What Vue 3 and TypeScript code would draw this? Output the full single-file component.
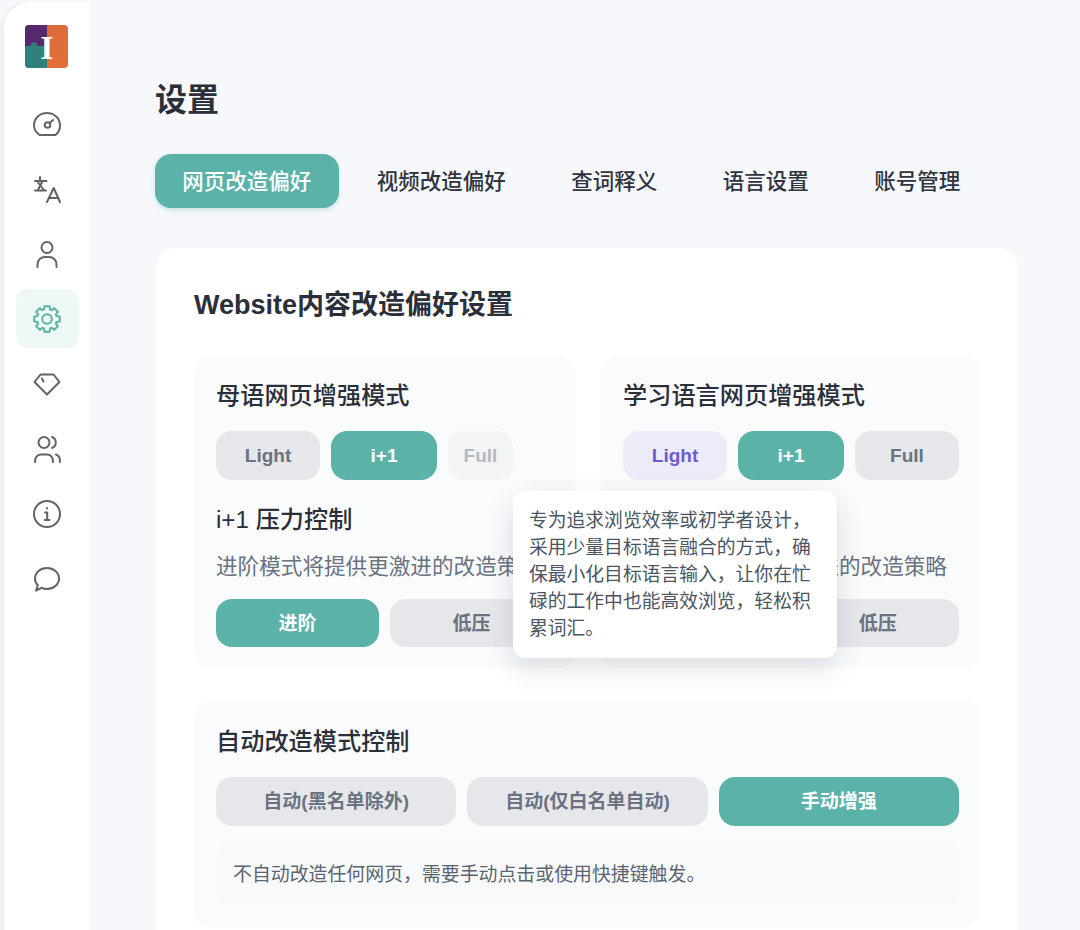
<script setup lang="ts">
import { ref } from 'vue'

interface NavItem {
  name: string
  paths: string[]
}

// 八齿齿轮的外轮廓
const gearPath = () => {
  const points: string[] = []
  for (let i = 0; i < 8; i++) {
    const angle = (i * Math.PI) / 4 - Math.PI / 2
    const corners: [number, number][] = [
      [-0.2, 13],
      [0.2, 13],
      [0.3, 10],
      [0.48, 10],
    ]
    corners.forEach(([offset, radius]) => {
      const x = 14 + radius * Math.cos(angle + offset)
      const y = 14 + radius * Math.sin(angle + offset)
      points.push(`${x.toFixed(2)} ${y.toFixed(2)}`)
    })
  }
  return `M${points.join('L')}Z`
}

const navItems: NavItem[] = [
  { name: 'dashboard', paths: ['M6.500 25h16c3-2.300 4.500-5.700 4.500-9.500C27 8.300 21.200 3 14 3S1 8.300 1 15.500C1 19.300 3.500 22.700 6.500 25Z', 'M16.600 13 20 10', 'M17.300 15a2.800 2.800 0 1 1-5.600 0 2.800 2.800 0 0 1 5.600 0Z'] },
  { name: 'translate', paths: ['M2 6h11.500', 'M7 2v4', 'M9.500 6 5 15', 'M5 7.500 11 15', 'M2 15.500h11', 'M14 27l6.700-14L27 27', 'M16.300 23h8.500'] },
  { name: 'user', paths: ['M19.500 7.500a5.500 5.500 0 1 1-11 0 5.500 5.500 0 0 1 11 0Z', 'M4.500 27v-2.500c0-4.500 3.500-7.500 7.500-7.500h4c4 0 7.500 3 7.500 7.500V27'] },
  { name: 'settings', paths: [gearPath(), 'M18.800 14a4.800 4.800 0 1 1-9.600 0 4.800 4.800 0 0 1 9.600 0Z'] },
  { name: 'vip', paths: ['M7.500 4.500h13L26.500 12 14 24.500 1.500 12l6-7.500Z', 'M9 8.500l1.500 3'] },
  { name: 'team', paths: ['M16.500 7.500a5.500 5.500 0 1 1-11 0 5.500 5.500 0 0 1 11 0Z', 'M2 27v-1c0-4 3-6.500 6-6.500h6c3 0 6 2.500 6 6.500v1', 'M19 2c2.500.9 3.800 3 3.800 5.500S21.500 12.100 19 13', 'M23 19.500c2.500 1 4 3.300 4 6.500v1'] },
  { name: 'about', paths: ['M27 14a13 13 0 1 1-26 0 13 13 0 0 1 26 0Z', 'M12 12.500h2.200V20', 'M11.800 20h4.600', 'M14 8v.5'] },
  { name: 'feedback', paths: ['M3 25.500l1.800-5.200C3 18.500 2 16.200 2 13.500 2 7.500 7.500 3 14 3s12 4.500 12 10.500S20.500 24 14 24c-2 0-3.800-.4-5.500-1.200L3 25.500Z'] },
]

const activeNav = ref('settings')

const tabs = ['网页改造偏好', '视频改造偏好', '查词释义', '语言设置', '账号管理']
const activeTab = ref(tabs[0])

const tooltipText = '专为追求浏览效率或初学者设计，采用少量目标语言融合的方式，确保最小化目标语言输入，让你在忙碌的工作中也能高效浏览，轻松积累词汇。'
</script>

<template>
  <div class="page">
    <!-- 侧边栏 -->
    <aside class="sidebar">
      <svg class="logo" viewBox="0 0 43 43" width="43" height="43">
        <defs>
          <linearGradient id="logoOrange" x1="0" y1="0" x2="0" y2="1">
            <stop offset="0" stop-color="#dc6c3c" />
            <stop offset="1" stop-color="#e26f35" />
          </linearGradient>
        </defs>
        <rect width="43" height="43" rx="4" fill="url(#logoOrange)" />
        <path d="M0 4a4 4 0 0 1 4-4h18v24H0Z" fill="#56296f" />
        <path d="M0 21h6c-.5-2 0-3.500 3-3.500s3.500 1.500 3 3.500h10v22H4a4 4 0 0 1-4-4Z" fill="#30807e" />
        <text x="21.800" y="34.300" text-anchor="middle" class="logo-letter">I</text>
      </svg>
      <nav class="nav">
        <div
          v-for="item in navItems"
          :key="item.name"
          class="nav-item"
          :class="{ active: item.name === activeNav }"
          @click="activeNav = item.name"
        >
          <svg viewBox="0 0 28 28" width="28" height="28" fill="none" stroke="currentColor" stroke-width="2" stroke-linecap="round" stroke-linejoin="round">
            <path v-for="d in item.paths" :key="d" :d="d" />
          </svg>
        </div>
      </nav>
    </aside>

    <main class="main">
      <h1 class="page-title">设置</h1>

      <!-- 标签页 -->
      <div class="tabs">
        <button
          v-for="tab in tabs"
          :key="tab"
          class="tab"
          :class="{ active: tab === activeTab }"
          @click="activeTab = tab"
        >
          {{ tab }}
        </button>
      </div>

      <section class="card">
        <h2 class="card-title">Website内容改造偏好设置</h2>

        <div class="panel-row">
          <div class="panel left">
            <h3 class="panel-title">母语网页增强模式</h3>
            <div class="btn-row">
              <button class="btn w104">Light</button>
              <button class="btn w106 on">i+1</button>
              <button class="btn w65 disabled">Full</button>
            </div>
            <h3 class="panel-title sub">i+1 压力控制</h3>
            <p class="desc">进阶模式将提供更激进的改造策略</p>
            <div class="btn-row">
              <button class="btn grow short on">进阶</button>
              <button class="btn grow short">低压</button>
            </div>
          </div>

          <div class="panel">
            <h3 class="panel-title">学习语言网页增强模式</h3>
            <div class="btn-row">
              <button class="btn w104 soft">Light</button>
              <button class="btn w106 on">i+1</button>
              <button class="btn w104">Full</button>
            </div>
            <h3 class="panel-title sub">i+1 压力控制</h3>
            <p class="desc">进阶模式将提供更激进的改造策略</p>
            <div class="btn-row">
              <button class="btn grow short on">进阶</button>
              <button class="btn grow short">低压</button>
            </div>
          </div>

          <!-- 悬浮提示 -->
          <div class="tooltip">{{ tooltipText }}</div>
        </div>

        <div class="panel auto">
          <h3 class="panel-title">自动改造模式控制</h3>
          <div class="btn-row">
            <button class="btn grow">自动(黑名单除外)</button>
            <button class="btn grow">自动(仅白名单自动)</button>
            <button class="btn grow on">手动增强</button>
          </div>
          <div class="note">不自动改造任何网页，需要手动点击或使用快捷键触发。</div>
        </div>
      </section>
    </main>
  </div>
</template>

<style>
html,
body {
  margin: 0;
  height: 930px;
  overflow: hidden;
  background: #f6f8fc;
}
</style>

<style scoped>
.page {
  display: flex;
  height: 930px;
  overflow: hidden;
  background: #f6f8fc;
  font-family: "Liberation Sans", "Noto Sans CJK SC", sans-serif;
  color: #2b2f3a;
}

/* 侧边栏 */
.sidebar {
  flex: 0 0 86px;
  margin: 2px 0 0 4px;
  background: #fff;
  border-top-left-radius: 26px;
  box-shadow: -4px 0 0 #f0f1f5;
  display: flex;
  flex-direction: column;
  align-items: center;
  padding-top: 23px;
  box-sizing: border-box;
}

.logo {
  display: block;
  margin-right: 1px;
}

.logo-letter {
  font-family: "Liberation Serif", serif;
  font-weight: 700;
  font-size: 34px;
  fill: #fff;
}

.nav {
  margin-top: 26px;
  display: flex;
  flex-direction: column;
  gap: 6px;
}

.nav-item {
  width: 63px;
  height: 59px;
  border-radius: 12px;
  display: flex;
  align-items: center;
  justify-content: center;
  color: #606368;
}

.nav-item.active {
  background: #eef8f7;
  color: #5bb2a8;
}

/* 主区域 */
.main {
  flex: 1;
  min-width: 0;
  padding: 78px 62px 0 65px;
}

.page-title {
  margin: 0 0 32px;
  font-size: 32px;
  line-height: 44px;
  font-weight: 700;
}

.tabs {
  display: flex;
  gap: 11px;
  margin-bottom: 40px;
}

.tab {
  height: 54px;
  padding: 0 27.250px 4px;
  border: 0;
  border-radius: 16px;
  background: transparent;
  font: inherit;
  font-size: 21.500px;
  font-weight: 500;
  color: #2f3440;
}

.tab.active {
  background: #5bb2a8;
  color: #fff;
  box-shadow: 0 2px 5px rgba(91, 178, 168, 0.3);
}

.card {
  margin-left: 1px;
  background: #fff;
  border-radius: 20px;
  padding: 39px 38px 40px 38px;
}

.card-title {
  margin: 0 0 33px;
  font-size: 27px;
  line-height: 36px;
  font-weight: 700;
}

.panel-row {
  position: relative;
  display: flex;
  gap: 26px;
  margin-bottom: 33px;
}

.panel {
  flex: 1;
  min-width: 0;
  background: #f9fbfd;
  border-radius: 16px;
  padding: 24px 21px 21px 22px;
}

.panel.left {
  flex: 0 0 381px;
  box-sizing: border-box;
  padding-right: 22px;
}

.panel-title {
  margin: 0 0 19px;
  font-size: 24.200px;
  line-height: 32px;
  font-weight: 500;
}

.panel-title.sub {
  margin: 24px 0 14px;
}

.desc {
  margin: 0 0 16px;
  padding-top: 1px;
  font-size: 21.600px;
  line-height: 32px;
  color: #6b7280;
  white-space: nowrap;
}

.btn-row {
  display: flex;
  gap: 11px;
}

.btn {
  height: 49px;
  padding: 0;
  border: 0;
  border-radius: 16px;
  background: #e5e7eb;
  color: #6b7280;
  font: inherit;
  font-size: 19px;
  font-weight: 700;
}

.btn.short {
  height: 48px;
  padding-bottom: 4px;
}

.btn.grow {
  flex: 1;
}

.auto .btn {
  padding-bottom: 5px;
}

.btn.w104 {
  width: 104px;
}

.btn.w106 {
  width: 106px;
}

.btn.w65 {
  width: 65px;
}

.btn.on {
  background: #5bb2a8;
  color: #fff;
}

.btn.soft {
  background: #ecebf8;
  color: #6c5dd3;
}

.btn.disabled {
  background: #f3f4f6;
  color: #b5b8be;
}

.tooltip {
  position: absolute;
  left: 319px;
  top: 135px;
  width: 324px;
  box-sizing: border-box;
  padding: 16px;
  background: #fff;
  border-radius: 12px;
  font-size: 18.800px;
  line-height: 27px;
  color: #4b5563;
  box-shadow: 0 10px 28px rgba(31, 41, 55, 0.14);
}

.auto {
  padding-top: 25px;
  padding-bottom: 22px;
}

.note {
  margin-top: 17px;
  height: 62px;
  box-sizing: border-box;
  padding: 0 17px 4px;
  display: flex;
  align-items: center;
  border-radius: 12px;
  background: #f8f9fb;
  font-size: 18.900px;
  color: #5b6472;
}
</style>
